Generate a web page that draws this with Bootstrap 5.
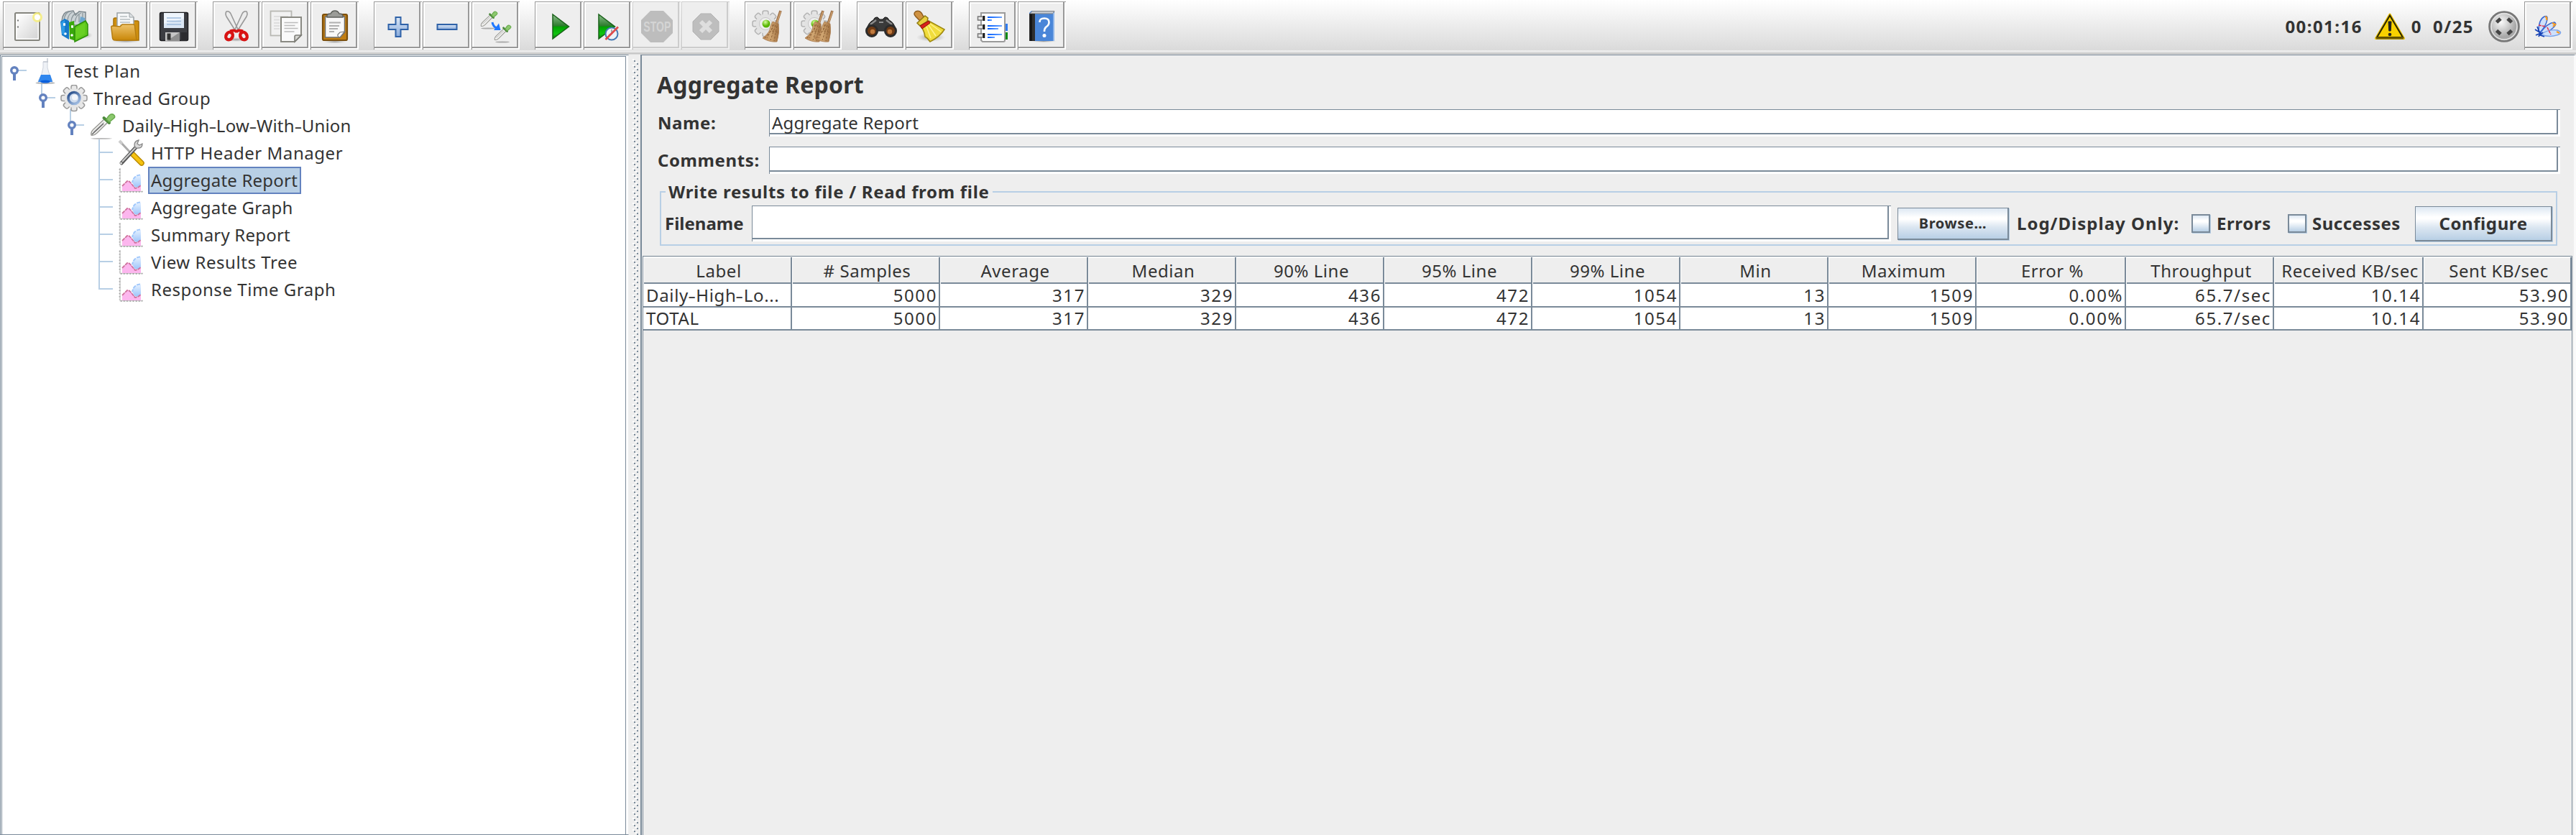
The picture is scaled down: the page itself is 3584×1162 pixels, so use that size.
<!DOCTYPE html>
<html lang="en">
<head>
<meta charset="utf-8">
<title>Aggregate Report</title>
<link rel="stylesheet" href="https://cdn.jsdelivr.net/npm/bootstrap@5.3.0/dist/css/bootstrap.min.css">
<style>
:root{--edge:#7a8a99;--sky:#b8cfe5;--ink:#333}
body{width:3584px;height:1162px;overflow:hidden;background:#eee;color:var(--ink);font-family:"Noto Sans","Open Sans",sans-serif;font-size:24px;letter-spacing:.55px;line-height:38px}
.fw-bold{letter-spacing:.6px}
svg{display:block;flex:none}
/* toolbar */
.toolstrip{height:76px;padding:2px 5px 0 4px;background:linear-gradient(#fff,#dadada 70px,#eee 70px,#eee 71px,#ddd 71px,#eee 72px,#eee 73px,#c8c8c8 73px,#c8c8c8 75px,#d8d8d8 75px)}
.toolset{gap:1px;margin-right:21px}
.tool{width:67px;height:67px;padding:0;border:0;background:#eee;box-shadow:inset 1px 1px #999,inset -2px -2px #fff,inset -4px -4px #999,inset 3px 3px #fff}
.tool:disabled{opacity:1;box-shadow:inset 1px 1px #ccc,inset -2px -2px #eee,inset -4px -4px #ccc,inset 2px 2px #f2f2f2}
.status-line{height:70px}
.digits{letter-spacing:1.45px}
.stat-zero{margin-right:15px}
.stat-total{margin-right:19px}
.stat-orb{margin-right:5px}
/* tree */
.tree-pane{width:875px;border:1px solid var(--edge);border-right:1px solid #eee;background:#fff;padding:1px 3px 0 1px}
.tree-box{border:1px solid var(--edge);border-bottom:0;height:100%;padding-top:1px}
.tree-row{height:38px}
.ind1{padding-left:40px}.ind2{padding-left:80px}.ind3{padding-left:120px}
.node-label{margin-left:3px;border:2px solid transparent;padding:0 3px 0 2px;height:38px;line-height:34px}
.node-snug{letter-spacing:.2px}
.node-on{background:var(--sky);border-color:#6382bf}
.hy{display:inline-block;transform:scaleX(1.4);margin:0 1px}
/* report */
.report-pane{border-left:2px solid var(--edge);border-top:1px solid var(--edge);padding-top:17px;border-right:3px solid #fafafa}
.report-head{font-size:32px;line-height:48px;letter-spacing:.2px;margin:0 0 10px 21px;height:48px}
.form-line{height:38px;margin:0 19px 14px 22px}
.form-line label{width:155px}
.swing-input{height:38px;border:0;background:#fff;box-shadow:inset 1px 1px var(--edge),inset -3px -3px #fff,inset -5px -5px var(--edge);padding:0 4px;line-height:38px;white-space:nowrap;letter-spacing:.2px}
.group-box{position:relative;margin:24px 23px 14px 25px;height:76px;border:2px solid var(--sky);padding:18px 5px 0 5px}
.group-title{position:absolute;left:6px;top:-20px;background:#eee;padding:0 4px;letter-spacing:.7px}
.group-line{height:50px;line-height:50px}
.swing-btn{border:1px solid var(--edge);border-right-width:2px;border-bottom-width:2px;border-radius:0;background:linear-gradient(#dde8f3,#fff 30%,#fff 36%,#dbe6f1 62%,#b8cfe5);color:var(--ink);padding:0;box-shadow:1px 1px var(--sky);font-size:24px;line-height:1}
.browse-btn{width:155px;height:45px;font-size:20px;margin-left:9px}
.conf-btn{width:191px;height:49px}
.swing-check{appearance:none;margin:0;width:26px;height:26px;border:2px solid var(--edge);background:linear-gradient(#dde8f3,#fff 30%,#fff 40%,#b8cfe5);box-shadow:1px 1px var(--sky)}
.f-name{width:121px;letter-spacing:0}
.log-only{letter-spacing:1px;margin-left:11px;width:243px}
.err-lab{margin-left:9px;width:99px}
.suc-lab{margin-left:8px;width:143px;letter-spacing:.5px}
.result-wrap{border:1px solid var(--edge);border-width:1px 1px 0 1px;margin:0 2px 0 1px}
.result-grid{table-layout:fixed;width:2683px;border-collapse:separate;border-spacing:0;margin-top:1px}
.result-grid th{height:38px;padding:0 0 0 5px;font-weight:400;text-align:center;line-height:38px;background:#eee;white-space:nowrap;box-shadow:inset 1px 1px #fff,inset 0 -1px #fff,inset 0 -3px var(--edge);border-right:2px solid var(--edge)}
.result-grid td{height:32px;padding:0 2px 0 4px;line-height:30px;background:#fff;text-align:right;border-right:2px solid var(--edge);border-bottom:2px solid var(--edge);letter-spacing:1.6px;white-space:nowrap}
.result-grid td:first-child{text-align:left;letter-spacing:.65px}
</style>
<script src="https://cdn.jsdelivr.net/npm/bootstrap@5.3.0/dist/js/bootstrap.bundle.min.js"></script>
</head>
<body class="d-flex flex-column">
<svg width="0" height="0" class="position-absolute">
<defs>
<linearGradient id="gGray" x2="1" y2="1"><stop stop-color="#fff"/><stop offset="1" stop-color="#d4d4d4"/></linearGradient>
<linearGradient id="gPlay" x2="0" y2="1"><stop stop-color="#8dbf8d"/><stop offset=".48" stop-color="#2a7a2a"/><stop offset=".5" stop-color="#00a000"/><stop offset=".8" stop-color="#0fc40f"/><stop offset="1" stop-color="#0a7a0a"/></linearGradient>
<linearGradient id="gFold" x2="0" y2="1"><stop stop-color="#eec36a"/><stop offset="1" stop-color="#c98708"/></linearGradient>
<linearGradient id="gBroom" x2="1"><stop stop-color="#b98450"/><stop offset=".5" stop-color="#d0a672"/><stop offset="1" stop-color="#a07040"/></linearGradient>
<linearGradient id="gBlue" x2="0" y2="1"><stop stop-color="#dbe7f6"/><stop offset="1" stop-color="#88aadb"/></linearGradient>
<linearGradient id="gPinkBlue" x2="0" y2="1"><stop stop-color="#e4f0ff"/><stop offset="1" stop-color="#9cc4fa"/></linearGradient>
<linearGradient id="gBar"><stop stop-color="#005cff"/><stop offset="1" stop-color="#6fa6ff"/></linearGradient>
<linearGradient id="gOrb" x2=".7" y2="1"><stop stop-color="#1f4684"/><stop offset="1" stop-color="#9db9df"/></linearGradient>
<radialGradient id="gShade"><stop stop-color="#777" stop-opacity=".7"/><stop offset="1" stop-color="#999" stop-opacity="0"/></radialGradient>
<radialGradient id="gBall" cx=".4" cy=".35"><stop stop-color="#fafafa"/><stop offset="1" stop-color="#a8a8a8"/></radialGradient>
<radialGradient id="gGreen" cx=".4" cy=".3"><stop stop-color="#d6ffa0"/><stop offset="1" stop-color="#56b400"/></radialGradient>
<g id="dropper">
<path d="M2 31Q1 27 5 23L20 9L25 13L10 28Q6 32 2 31Z" fill="#f4f4f2" stroke="#9a9a95" stroke-width="1.500"/>
<path d="M5 27L20 13" stroke="#c4c4c4" stroke-width="1.500"/>
<path d="M19.500 7L27 14" stroke="#4d8a3d" stroke-width="4" stroke-linecap="round"/>
<path d="M23 9Q28 0 32 2Q37 5 33 8L27 13Z" fill="#8cc86e" stroke="#68aa4d" stroke-width="1.500"/>
</g>
<g id="teeth"><rect x="-4" y="-18" width="8" height="36" rx="2.500"/><rect x="-4" y="-18" width="8" height="36" rx="2.500" transform="rotate(45)"/><rect x="-4" y="-18" width="8" height="36" rx="2.500" transform="rotate(90)"/><rect x="-4" y="-18" width="8" height="36" rx="2.500" transform="rotate(135)"/></g>
<g id="gear">
<use href="#teeth" fill="#e4e4e4" stroke="#b4b4b4" stroke-width="1.500"/>
<circle r="13.500" fill="#e2e2e2"/><circle r="8.500" fill="#efefef" stroke="#c4c4c4"/>
</g>
<g id="straw">
<path d="M50 12L42 36" stroke="#9c7047" stroke-width="3.600"/><path d="M50 13L43 34" stroke="#cfa373" stroke-width="1.400"/>
<path d="M39 27L47 30Q49 42 45 55Q34 56 25 50Q36 42 36 33Z" fill="url(#gBroom)" stroke="#a87a4c" stroke-width=".8"/>
<path d="M41 31L31 50M43 32L36 53M45 33L41 54M39 31L38 38L28 50M38 40L46 42" stroke="#8d6036" stroke-width="1" fill="none" stroke-dasharray="3 2"/>
</g>
</defs>
<symbol id="t-new" viewBox="0 0 65 65"><rect x="17" y="15" width="34" height="38" rx="1.500" fill="#fff" stroke="#85857e" stroke-width="2"/><rect x="19.500" y="17.500" width="29" height="33" fill="url(#gGray)"/><path d="M20 25.500h2M20 34.500h2" stroke="#777" stroke-width="2"/><circle cx="48" cy="21" r="7" fill="#f7ee7a" opacity=".85"/><circle cx="48" cy="21" r="4" fill="#fff"/></symbol>
<symbol id="t-templates" viewBox="0 0 65 65"><ellipse cx="45" cy="46" rx="12" ry="5" fill="url(#gShade)"/><path d="M14 26Q15 14 23 13L30 12L33 18L38 13L47 14V32H14Z" fill="#ccd3d6" stroke="#7c878d" stroke-width="1.500"/><path d="M17 24Q19 14 25 13M22 25Q23 16 29 14M27 27Q28 16 36 15M32 28Q34 17 41 15M38 28V17M43 29V15" stroke="#8b979c" fill="none" stroke-width="1.300"/><path d="M12 27L18 23L24 26V52L14 46Z" fill="#1778c8"/><path d="M13 28L18 25V46L14 44Z" fill="#2d9be6"/><path d="M40 20L46 22V32H38Z" fill="#6da7cf"/><path d="M24 28L31 26L33 54L25 51Z" fill="#3aa80c"/><path d="M32 34L47 26L50 31V46L32 55Z" fill="#5fc81c" stroke="#2c9008" stroke-width="1.500"/><path d="M33 37L46 29V44L33 52Z" fill="#70d628" opacity=".6"/><path d="M16 31h3M27 34h3" stroke="#fff" stroke-width="3.500"/><circle cx="19" cy="44" r="1.800" fill="#fff"/><circle cx="28" cy="46" r="1.800" fill="#fff"/></symbol>
<symbol id="t-open" viewBox="0 0 65 65"><ellipse cx="35" cy="54" rx="20" ry="3" fill="url(#gShade)"/><path d="M18 33V24Q18 22 20 22H30L32 26H51Q53 26 53 28V53H22Z" fill="#cf900f" stroke="#a87208" stroke-width="1.500"/><path d="M23 15H40L46 21V36H23Z" fill="#f6f8f9" stroke="#9aa1a5" stroke-width="1.500"/><path d="M40 15V21H46" fill="#dfe3e5" stroke="#9aa1a5"/><path d="M27 20h10M27 24h14M27 28h14M27 32h14" stroke="#b7bdc0" stroke-width="1.600"/><path d="M15 36Q14 33 17 33L27 34L30 31H45Q48 31 47.500 34L50 53H20Q17 53 16.500 50Z" fill="url(#gFold)" stroke="#b57c10" stroke-width="1.500"/></symbol>
<symbol id="t-save" viewBox="0 0 65 65"><rect x="14.500" y="14.500" width="39" height="39" rx="2" fill="#3c3d42" stroke="#1d1d20" stroke-width="1.500"/><rect x="20" y="15" width="28" height="21" fill="#dbe7f5"/><path d="M20 15h28v8L20 30Z" fill="#eff5fc"/><path d="M24 22h20M24 26.500h20M24 31h20" stroke="#9fbbdc" stroke-width="1.600"/><rect x="22" y="42" width="20" height="12" fill="#c5c5c5"/><path d="M42 42L24 54H42Z" fill="#8f8f8f"/><rect x="24.500" y="43.500" width="5" height="9" fill="#333"/><rect x="44" y="42" width="8" height="12" fill="#2c2c30"/></symbol>
<symbol id="t-cut" viewBox="0 0 65 65"><ellipse cx="33" cy="52" rx="16" ry="3" fill="url(#gShade)"/><path d="M19 13Q23 12 25 16L36 40L31 39L19 20Q17 16 19 13ZM47 13Q43 12 41 16L30 40L35 39L47 20Q49 16 47 13Z" fill="#ececec" stroke="#999" stroke-width="1.600"/><g fill="none" stroke="#d81414" stroke-width="4.500"><ellipse cx="23" cy="47" rx="4.500" ry="5.500" transform="rotate(30 23 47)"/><ellipse cx="43" cy="47" rx="4.500" ry="5.500" transform="rotate(-30 43 47)"/><path d="M24 40.500Q32 38 33 42Q34 38 42 40.500" stroke-width="4"/></g></symbol>
<symbol id="t-copy" viewBox="0 0 65 65"><rect x="12.500" y="12.500" width="29" height="34" fill="#f1f1f1" stroke="#b8b8b3" stroke-width="1.800"/><path d="M17 20h20M17 24.500h8M17 29h8M17 33h8M17 37h8" stroke="#dedede" stroke-width="2"/><path d="M27 21H55V46L46 55H27Z" fill="#fafafa" stroke="#8a8a83" stroke-width="2"/><path d="M31.500 28.500h19M31.500 32.500h15M31.500 36.500h19M31.500 41h14" stroke="#bcbcbc" stroke-width="1.700"/><path d="M55 46H48Q46 46 46 48V55Z" fill="#d6d6d2" stroke="#7e7e78" stroke-width="1.600"/></symbol>
<symbol id="t-paste" viewBox="0 0 65 65"><ellipse cx="34" cy="55" rx="16" ry="2.500" fill="url(#gShade)"/><rect x="17" y="17" width="34" height="36" rx="2" fill="#c17d11" stroke="#7b4f0c" stroke-width="2.200"/><path d="M20.500 20H47.500V42L41 49H20.500Z" fill="#f8f8f8" stroke="#6d6d6a" stroke-width="1.500"/><path d="M47.500 41L41 49Q37 48 38 45L41 42Z" fill="#fff" stroke="#777" stroke-width="1.200"/><path d="M26 28.500h16M26 33h14M26 37h12M26 41h7" stroke="#b0b0b0" stroke-width="1.800"/><path d="M23 21Q22 16 28 16Q30 12 34 12Q38 12 40 16Q46 16 45 21Z" fill="#9b9c98" stroke="#5d5f5b" stroke-width="1.500"/></symbol>
<symbol id="t-plus" viewBox="0 0 65 65"><path d="M30.500 21h7v10h10v7h-10v10h-7v-10h-10v-7h10Z" fill="url(#gBlue)" stroke="#2f62a8" stroke-width="2"/></symbol>
<symbol id="t-minus" viewBox="0 0 65 65"><rect x="20.500" y="31" width="27" height="7" fill="url(#gBlue)" stroke="#2f62a8" stroke-width="2"/></symbol>
<symbol id="t-toggle" viewBox="0 0 65 65"><ellipse cx="23" cy="36.500" rx="10" ry=".9" fill="#aaa"/><ellipse cx="43" cy="55.500" rx="10" ry=".9" fill="#aaa"/><use href="#dropper" transform="translate(12 12) scale(.69)"/><use href="#dropper" transform="translate(31 31) scale(.69)"/><path d="M29 28Q30 34 35 36" fill="none" stroke="#1f78ff" stroke-width="3"/><path d="M38 29.500L40.500 39L31 39Z" fill="#1f78ff"/></symbol>
<symbol id="t-start" viewBox="0 0 65 65"><path d="M25 17L47.500 34L25 51Z" fill="url(#gPlay)" stroke="#186018" stroke-width="1.500"/></symbol>
<symbol id="t-nopause" viewBox="0 0 65 65"><path d="M21 17L43.500 34L21 51Z" fill="url(#gPlay)" stroke="#186018" stroke-width="1.500"/><circle cx="39" cy="44" r="8.500" fill="#eef2f6" stroke="#4579b3" stroke-width="2"/><path d="M39 38V44L35 46" stroke="#aaa" stroke-width="2" fill="none"/><path d="M30.500 52L48 34.500" stroke="#e04a4a" stroke-width="2.600"/></symbol>
<symbol id="t-shut" viewBox="0 0 65 65"><path d="M27 16H41L52 27V41L41 52H27L16 41V27Z" fill="#bebebe" stroke="#b2b2b2"/><path d="M27 27L41 41M41 27L27 41" stroke="#dedede" stroke-width="6"/></symbol>
<symbol id="t-clear" viewBox="0 0 65 65"><use href="#gear" x="29" y="30"/><circle cx="30" cy="30" r="5.500" fill="url(#gGreen)"/><use href="#straw"/></symbol>
<symbol id="t-clearall" viewBox="0 0 65 65"><use href="#gear" x="29" y="30"/><circle cx="30" cy="30" r="5.500" fill="url(#gGreen)"/><use href="#straw" x="-9"/><use href="#straw" x="4"/></symbol>
<symbol id="t-find" viewBox="0 0 65 65"><path d="M14 38Q16 28 23 25Q25 20 29 21L32 24H36L39 21Q43 20 45 25Q52 28 54 38L46 44L40 40H28L22 44Z" fill="#3a3a3a" stroke="#1c1c1c"/><path d="M19 31L27 25M41 25L49 31M31 28h6" stroke="#8c8c8c" stroke-width="2.200"/><g fill="#6e3a14" stroke="#2b2b2b" stroke-width="3"><circle cx="21" cy="40" r="7.500"/><circle cx="47" cy="40" r="7.500"/></g><circle cx="22" cy="41" r="3.200" fill="#c07a3e"/><circle cx="46" cy="41" r="3.200" fill="#c07a3e"/></symbol>
<symbol id="t-reset" viewBox="0 0 65 65"><ellipse cx="35" cy="49" rx="20" ry="6" fill="url(#gShade)"/><path d="M14 20Q10 16 14 13Q19 11 22 15L26 22L20 26Z" fill="#cf9242" stroke="#8f5c1d" stroke-width="1.500"/><path d="M16 29L27 19L31 22L30 27L20 33Z" fill="#e9cf3f" stroke="#8f7a10" stroke-width="1.500"/><path d="M22 35L32 26L54 38Q48 48 34 55Q31 50 27 48Q26 40 22 35Z" fill="#f0dc3c" stroke="#a08a10" stroke-width="1.600"/><path d="M29 34L35 50M32 32L42 47M34 30L49 41" stroke="#fff28c" stroke-width="1.500"/><path d="M20 33L32 26L34 29L23 37Z" fill="#d9201b" stroke="#8f120f"/></symbol>
<symbol id="t-funcs" viewBox="0 0 65 65"><rect x="48" y="30" width="6" height="10" fill="#2f7cf0"/><rect x="48" y="42" width="6" height="10" fill="#0b8a14"/><path d="M17 15H50V53Q50 55 48 55H19L17 53Z" fill="#fff" stroke="#9b9b9b" stroke-width="2"/><g fill="#e8e8e8" stroke="#777" stroke-width="1.500"><rect x="12.500" y="20" width="7" height="5"/><rect x="12.500" y="32" width="7" height="5"/><rect x="12.500" y="44" width="7" height="5"/></g><path d="M21 19v7M21 31v7M21 43v7" stroke="#111" stroke-width="2.500"/><g fill="url(#gBar)"><rect x="26" y="20" width="20" height="2"/><rect x="26" y="24" width="6" height="2"/><rect x="26" y="32" width="20" height="2"/><rect x="26" y="36" width="15" height="2"/><rect x="26" y="44" width="20" height="2"/><rect x="26" y="48" width="10" height="2"/></g></symbol>
<symbol id="t-help" viewBox="0 0 65 65"><ellipse cx="36" cy="54.500" rx="18" ry="1.500" fill="url(#gShade)"/><path d="M16 15L19 12H51V54H16Z" fill="#4a86d8"/><path d="M17 16L20 12.500H51L49 16Z" fill="#c4c8ce" stroke="#7d8289"/><rect x="16" y="16" width="8" height="38" fill="#2f2f2f"/><rect x="17" y="17" width="3" height="37" fill="#161616"/><path d="M50 15V54" stroke="#8fb6ea" stroke-width="2"/><path d="M30.500 28Q30 22.500 37 22.500Q43.500 22.500 43.500 28Q43.500 32 39.500 34.500Q37 36.500 37 41" fill="none" stroke="#fff" stroke-width="2.600"/><circle cx="37" cy="46.500" r="2.500" fill="#fff"/></symbol>
<symbol id="t-feather" viewBox="0 0 65 65"><g fill="#cfe0fa" stroke="#3a68d2" stroke-width="1.400"><path d="M20 40Q20 24 28 20Q33 18 32 24Q30 34 22 42Z"/><path d="M22 43Q32 29 42 28Q46 30 41 35Q34 42 22 44Z"/><path d="M23 45Q34 37 46 39Q54 42 48 45Q36 50 23 45Z" stroke="#7aa3ea"/></g><path d="M29 20.500Q32 20 31 25M39 29L43 31L40 34M45 41L49 43" stroke="#f59a23" stroke-width="2.400" fill="none"/><path d="M20 32L30 34M32 35L37 45" stroke="#e33048" stroke-width="1.500" fill="none" stroke-dasharray="4 1"/><path d="M15 38L23 43L16 46M18 34L22 44L20 48M26 42L22 46L28 48" stroke="#1541b4" stroke-width="1.700" fill="none"/></symbol>
<symbol id="n-key" viewBox="0 0 40 38"><path d="M17 18H34" stroke="#b8cfe5" stroke-width="2"/><path d="M17 20V32" stroke="#6382bf" stroke-width="4"/><circle cx="17" cy="18" r="4.300" fill="#fff" stroke="#6382bf" stroke-width="3.400"/></symbol>
<symbol id="n-keyc" viewBox="0 0 40 38"><path d="M15 0V14" stroke="#b8cfe5" stroke-width="2"/><use href="#n-key" width="40" height="38"/></symbol>
<symbol id="n-tee" viewBox="0 0 40 38"><path d="M15 0V38M15 18H34" stroke="#b8cfe5" stroke-width="2"/></symbol>
<symbol id="n-end" viewBox="0 0 40 38"><path d="M15 0V18H34" fill="none" stroke="#b8cfe5" stroke-width="2"/></symbol>
<symbol id="n-flask" viewBox="0 0 40 38"><path d="M15 36V38" stroke="#b8cfe5" stroke-width="2"/><ellipse cx="20" cy="35.500" rx="13.500" ry="1.500" fill="#888" opacity=".7"/><path d="M17 6H23V14Q25 24 30 33Q30 35 28 35H12Q10 35 10 33Q16 24 17 14Z" fill="#eef1f6" stroke="#ccd2dc"/><path d="M14 24H27Q29 30 30 34H10Q12 29 14 24Z" fill="#2f86ee"/><ellipse cx="20" cy="33.500" rx="7" ry="2" fill="#0a5fdc"/><path d="M23 1V7M17 6H24" stroke="#c3c9d2" stroke-width="1.500"/></symbol>
<symbol id="n-gear" viewBox="0 0 40 38"><path d="M15 34V38" stroke="#b8cfe5" stroke-width="2"/><g transform="translate(20 18.500)"><use href="#teeth" fill="#e8e8e8" stroke="#999" stroke-width="1.500"/><circle r="13.500" fill="#e6e6e6"/><circle r="8" fill="#cfdcee" stroke="url(#gOrb)" stroke-width="3.600"/><circle r="4" cx="1" cy="-1" fill="#f4f6fa"/></g></symbol>
<symbol id="n-drop" viewBox="0 0 40 38"><ellipse cx="18" cy="36.800" rx="15" ry=".9" fill="#b5b5b5"/><use href="#dropper" x="2" y="1"/><path d="M5 31L21 16" stroke="#666" stroke-width="1.600"/></symbol>
<symbol id="n-tools" viewBox="0 0 40 38"><path d="M4 3L20 20" stroke="#aaa" stroke-width="3"/><path d="M3 2L7 6" stroke="#ccc" stroke-width="4"/><path d="M21 20L34 33" stroke="#b98a00" stroke-width="7.500" stroke-linecap="round"/><path d="M21 20L34 33" stroke="#f5c211" stroke-width="4.600" stroke-linecap="round"/><path d="M6 33L27 10" stroke="#555" stroke-width="5" stroke-linecap="round"/><path d="M7 31L27 10" stroke="#ccc" stroke-width="2"/><path d="M30 1Q24 2 24 8Q25 13 30 12Q35 12 35 6L31 8L28 6Z" fill="#d9d9d9" stroke="#888" stroke-width="1.300"/><circle cx="5.500" cy="33" r="1.500" fill="#ddd"/></symbol>
<symbol id="n-chart" viewBox="0 0 40 38"><path d="M4 2V34.500H36" fill="none" stroke="#c4c4c4" stroke-width="1.300"/><path d="M3.500 3V33M5 35H35" stroke="#999" stroke-width="1.800" stroke-dasharray="1.200 3"/><path d="M33 12Q22 12 21 22L24 28L29 29L33 26Z" fill="url(#gPinkBlue)"/><path d="M32 11.500Q23 12 21 22" fill="none" stroke="#9fc7fb" stroke-width="2" stroke-dasharray="5 1.500"/><path d="M7 28L15 20L18 21L25 30L29 30L33 27V34H7Z" fill="#fcb6ee"/><path d="M7 27L14 20L17 20.500L20 24L25 30L29 29L33 26" fill="none" stroke="#cf6f9d" stroke-width="1.800" stroke-dasharray="5 .8"/></symbol>
</svg>

<header class="toolstrip d-flex align-items-start">
 <div class="toolset d-flex">
  <button class="tool"><svg width="65" height="65"><use href="#t-new"/></svg></button>
  <button class="tool"><svg width="65" height="65"><use href="#t-templates"/></svg></button>
  <button class="tool"><svg width="65" height="65"><use href="#t-open"/></svg></button>
  <button class="tool"><svg width="65" height="65"><use href="#t-save"/></svg></button>
 </div>
 <div class="toolset d-flex">
  <button class="tool"><svg width="65" height="65"><use href="#t-cut"/></svg></button>
  <button class="tool"><svg width="65" height="65"><use href="#t-copy"/></svg></button>
  <button class="tool"><svg width="65" height="65"><use href="#t-paste"/></svg></button>
 </div>
 <div class="toolset d-flex">
  <button class="tool"><svg width="65" height="65"><use href="#t-plus"/></svg></button>
  <button class="tool"><svg width="65" height="65"><use href="#t-minus"/></svg></button>
  <button class="tool"><svg width="65" height="65"><use href="#t-toggle"/></svg></button>
 </div>
 <div class="toolset d-flex">
  <button class="tool"><svg width="65" height="65"><use href="#t-start"/></svg></button>
  <button class="tool"><svg width="65" height="65"><use href="#t-nopause"/></svg></button>
  <button class="tool" disabled><svg width="65" height="65" viewBox="0 0 65 65"><path d="M25 12H43L56 25V43L43 56H25L12 43V25Z" fill="#bdbdbd"/><text x="15.300" y="41" textLength="38" lengthAdjust="spacingAndGlyphs" font-family="Liberation Sans" font-weight="700" font-size="20" letter-spacing="0" fill="#d4d4d4">STOP</text></svg></button>
  <button class="tool" disabled><svg width="65" height="65"><use href="#t-shut"/></svg></button>
 </div>
 <div class="toolset d-flex">
  <button class="tool"><svg width="65" height="65"><use href="#t-clear"/></svg></button>
  <button class="tool"><svg width="65" height="65"><use href="#t-clearall"/></svg></button>
 </div>
 <div class="toolset d-flex">
  <button class="tool"><svg width="65" height="65"><use href="#t-find"/></svg></button>
  <button class="tool"><svg width="65" height="65"><use href="#t-reset"/></svg></button>
 </div>
 <div class="toolset d-flex">
  <button class="tool"><svg width="65" height="65"><use href="#t-funcs"/></svg></button>
  <button class="tool"><svg width="65" height="65"><use href="#t-help"/></svg></button>
 </div>
 <div class="ms-auto d-flex align-items-start">
  <div class="status-line d-flex align-items-center fw-bold">
   <span class="digits me-3">00:01:16</span>
   <svg width="44" height="40" viewBox="0 0 44 40" class="me-2"><path d="M22 3L41.500 36.500H2.500Z" fill="#f7cf00" stroke="#e9c200" stroke-width="3" stroke-linejoin="round"/><path d="M22 4.500L40 35H4Z" fill="#f8d100" stroke="#2b2500" stroke-width="2"/><path d="M3 36H41" stroke="#6e5c00" stroke-width="3"/><path d="M20 13H24L23.200 26H20.800Z" fill="#222" stroke="#222"/><circle cx="22" cy="31" r="2.300" fill="#222"/></svg>
   <span class="digits stat-zero">0</span>
   <span class="digits stat-total">0/25</span>
   <svg width="46" height="46" viewBox="0 0 46 46" class="stat-orb"><circle cx="23" cy="23" r="20.500" fill="url(#gBall)" stroke="#777" stroke-width="2.600"/><circle cx="23" cy="23" r="18" fill="none" stroke="#e4e4e4" stroke-width="1.500"/><g stroke="#444" stroke-width="5"><path d="M12.500 17L18 12M28 12L33.500 17M33.500 28.500L28 33.500M18 33.500L12.500 28.500"/></g></svg>
  </div>
  <button class="tool"><svg width="65" height="65"><use href="#t-feather"/></svg></button>
 </div>
</header>

<main class="d-flex flex-grow-1">
 <nav class="tree-pane flex-shrink-0">
  <div class="tree-box">
   <div class="tree-row d-flex"><svg width="40" height="38"><use href="#n-key"/></svg><svg width="40" height="38"><use href="#n-flask"/></svg><span class="node-label">Test Plan</span></div>
   <div class="tree-row d-flex ind1"><svg width="40" height="38"><use href="#n-keyc"/></svg><svg width="40" height="38"><use href="#n-gear"/></svg><span class="node-label">Thread Group</span></div>
   <div class="tree-row d-flex ind2"><svg width="40" height="38"><use href="#n-keyc"/></svg><svg width="40" height="38"><use href="#n-drop"/></svg><span class="node-label node-snug">Daily<span class="hy">-</span>High<span class="hy">-</span>Low<span class="hy">-</span>With<span class="hy">-</span>Union</span></div>
   <div class="tree-row d-flex ind3"><svg width="40" height="38"><use href="#n-tee"/></svg><svg width="40" height="38"><use href="#n-tools"/></svg><span class="node-label">HTTP Header Manager</span></div>
   <div class="tree-row d-flex ind3"><svg width="40" height="38"><use href="#n-tee"/></svg><svg width="40" height="38"><use href="#n-chart"/></svg><span class="node-label node-snug node-on">Aggregate Report</span></div>
   <div class="tree-row d-flex ind3"><svg width="40" height="38"><use href="#n-tee"/></svg><svg width="40" height="38"><use href="#n-chart"/></svg><span class="node-label node-snug">Aggregate Graph</span></div>
   <div class="tree-row d-flex ind3"><svg width="40" height="38"><use href="#n-tee"/></svg><svg width="40" height="38"><use href="#n-chart"/></svg><span class="node-label node-snug">Summary Report</span></div>
   <div class="tree-row d-flex ind3"><svg width="40" height="38"><use href="#n-tee"/></svg><svg width="40" height="38"><use href="#n-chart"/></svg><span class="node-label">View Results Tree</span></div>
   <div class="tree-row d-flex ind3"><svg width="40" height="38"><use href="#n-end"/></svg><svg width="40" height="38"><use href="#n-chart"/></svg><span class="node-label">Response Time Graph</span></div>
  </div>
 </nav>
 <svg width="16" height="1086"><defs><pattern id="dots" width="8" height="8" patternUnits="userSpaceOnUse" x="5" y="6"><path d="M0 0h2v2H0ZM4 4h2v2H4Z" fill="#fff"/><path d="M2 2h2v2H2ZM6 6h2v2H6Z" fill="#7a8a99"/></pattern></defs><rect x="5" y="6" width="8" height="1080" fill="url(#dots)"/></svg>
 <section class="report-pane flex-grow-1 d-flex flex-column">
  <h1 class="report-head fw-bold">Aggregate Report</h1>
  <div class="form-line d-flex"><label class="fw-bold">Name:</label><div class="swing-input flex-grow-1">Aggregate Report</div></div>
  <div class="form-line d-flex mb-0"><label class="fw-bold">Comments:</label><div class="swing-input flex-grow-1"></div></div>
  <div class="group-box">
   <div class="group-title fw-bold">Write results to file / Read from file</div>
   <div class="group-line d-flex align-items-center fw-bold">
    <span class="f-name">Filename</span>
    <div class="swing-input flex-grow-1 h-100"></div>
    <button class="swing-btn browse-btn fw-bold">Browse…</button>
    <span class="log-only">Log/Display Only:</span>
    <input type="checkbox" class="swing-check"><span class="err-lab">Errors</span>
    <input type="checkbox" class="swing-check"><span class="suc-lab">Successes</span>
    <button class="swing-btn conf-btn fw-bold">Configure</button>
   </div>
  </div>
  <div class="result-wrap flex-grow-1">
   <table class="result-grid">
    <colgroup><col style="width:207px"><col span="8" style="width:206px"><col style="width:208px"><col style="width:206px"><col style="width:208px"><col style="width:206px"></colgroup>
    <thead><tr><th>Label</th><th># Samples</th><th>Average</th><th>Median</th><th>90% Line</th><th>95% Line</th><th>99% Line</th><th>Min</th><th>Maximum</th><th>Error %</th><th>Throughput</th><th>Received KB/sec</th><th>Sent KB/sec</th></tr></thead>
    <tbody>
     <tr><td>Daily<span class="hy">-</span>High<span class="hy">-</span>Lo...</td><td>5000</td><td>317</td><td>329</td><td>436</td><td>472</td><td>1054</td><td>13</td><td>1509</td><td>0.00%</td><td>65.7/sec</td><td>10.14</td><td>53.90</td></tr>
     <tr><td>TOTAL</td><td>5000</td><td>317</td><td>329</td><td>436</td><td>472</td><td>1054</td><td>13</td><td>1509</td><td>0.00%</td><td>65.7/sec</td><td>10.14</td><td>53.90</td></tr>
    </tbody>
   </table>
  </div>
 </section>
</main>
</body>
</html>
